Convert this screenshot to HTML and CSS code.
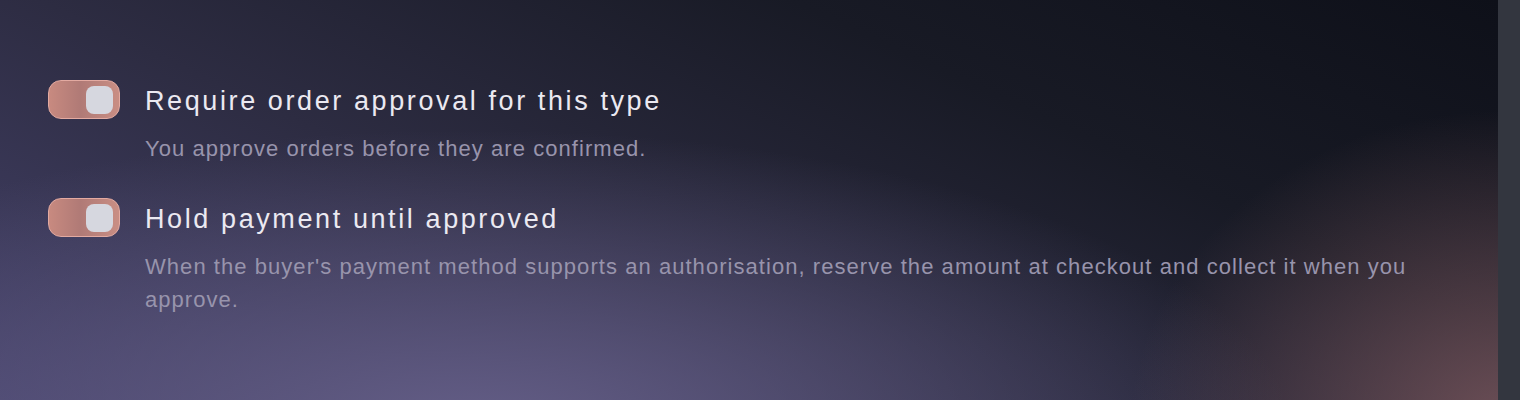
FILE: index.html
```html
<!DOCTYPE html>
<html>
<head>
<meta charset="utf-8">
<link rel="stylesheet" href="styles.css">
</head>
<body>
<div class="page">
  <main class="content">
    <div class="setting">
      <div class="toggle"><span class="knob"></span></div>
      <div class="text">
        <div class="title">Require order approval for this type</div>
        <div class="desc">You approve orders before they are confirmed.</div>
      </div>
    </div>
    <div class="setting">
      <div class="toggle"><span class="knob"></span></div>
      <div class="text">
        <div class="title">Hold payment until approved</div>
        <div class="desc">When the buyer's payment method supports an authorisation, reserve the amount at checkout and collect it when you approve.</div>
      </div>
    </div>
  </main>
  <div class="scrollbar"></div>
</div>
</body>
</html>
```

FILE: styles.css
```css
html, body {
  margin: 0;
  padding: 0;
  height: 100%;
}
body {
  font-family: "Liberation Sans", Arial, sans-serif;
  overflow: hidden;
}
.page {
  display: flex;
  width: 1520px;
  height: 400px;
}
.content {
  flex: 1;
  box-sizing: border-box;
  padding: 80px 40px 0 48px;
  display: flex;
  flex-direction: column;
  gap: 33px;
  background:
    radial-gradient(ellipse 380px 320px at 1510px 430px, rgba(130, 92, 98, 0.8), rgba(130, 92, 98, 0) 100%),
    radial-gradient(ellipse 820px 300px at 470px 430px, rgba(100, 94, 135, 1), rgba(100, 94, 135, 0) 100%),
    linear-gradient(205deg, #0e1019 0%, #181a25 30%, #2d2c42 62%, #45426a 100%);
}
.setting {
  display: flex;
  gap: 25px;
  align-items: flex-start;
}
.toggle {
  flex: none;
  width: 72px;
  height: 39px;
  box-sizing: border-box;
  border-radius: 13px;
  border: 1.5px solid #e3aaa1;
  background: linear-gradient(90deg, #c88a80 0%, #b07a76 45%, #c98e84 100%);
  display: flex;
  justify-content: flex-end;
  align-items: center;
  padding-right: 6px;
}
.knob {
  width: 27px;
  height: 28px;
  border-radius: 8px;
  background: #d6d7df;
}
.text {
  display: flex;
  flex-direction: column;
  max-width: 1310px;
}
.title {
  font-size: 27px;
  line-height: 42px;
  letter-spacing: 2.6px;
  color: #ebe9f1;
}
.desc {
  font-size: 22px;
  line-height: 33px;
  letter-spacing: 1.05px;
  color: #9894ac;
  margin-top: 10px;
}
.scrollbar {
  flex: none;
  width: 22px;
  background: #33363f;
}
```
